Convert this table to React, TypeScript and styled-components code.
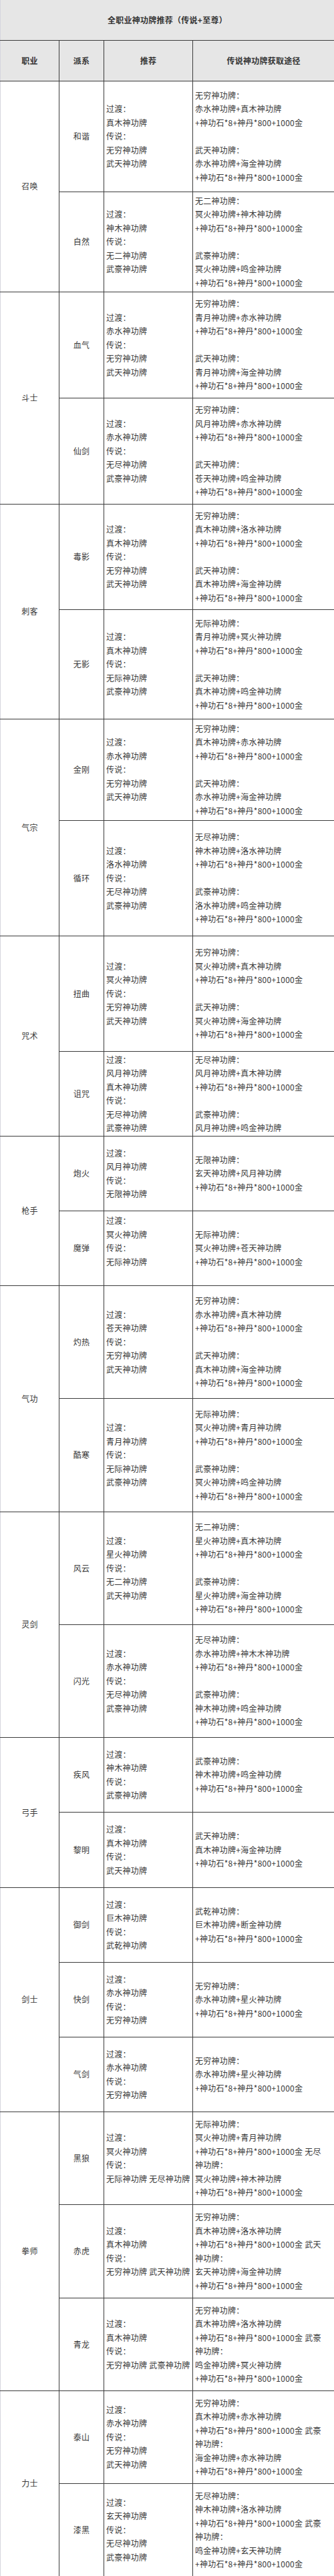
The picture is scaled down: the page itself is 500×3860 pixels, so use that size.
import React from "react";
import styled, { createGlobalStyle } from "styled-components";

type Branch = { name: string; h: number; rec: string[]; way: string[] };
type Job = { name: string; branches: Branch[] };

const COST = "+神功石*8+神丹*800+1000金";

const jobs: Job[] = [
  {
    name: "召唤",
    branches: [
      {
        name: "和谐",
        h: 166,
        rec: ["过渡：", "真木神功牌", "传说：", "无穷神功牌", "武天神功牌"],
        way: ["无穷神功牌：", "赤水神功牌+真木神功牌", COST, "", "武天神功牌：", "赤水神功牌+海金神功牌", COST],
      },
      {
        name: "自然",
        h: 150,
        rec: ["过渡：", "神木神功牌", "传说：", "无二神功牌", "武豪神功牌"],
        way: ["无二神功牌：", "冥火神功牌+神木神功牌", COST, "", "武豪神功牌：", "冥火神功牌+鸣金神功牌", COST],
      },
    ],
  },
  {
    name: "斗士",
    branches: [
      {
        name: "血气",
        h: 159,
        rec: ["过渡：", "赤水神功牌", "传说：", "无穷神功牌", "武天神功牌"],
        way: ["无穷神功牌：", "青月神功牌+赤水神功牌", COST, "", "武天神功牌：", "青月神功牌+海金神功牌", COST],
      },
      {
        name: "仙剑",
        h: 159,
        rec: ["过渡：", "赤水神功牌", "传说：", "无尽神功牌", "武豪神功牌"],
        way: ["无穷神功牌：", "风月神功牌+赤水神功牌", COST, "", "武天神功牌：", "苍天神功牌+鸣金神功牌", COST],
      },
    ],
  },
  {
    name: "刺客",
    branches: [
      {
        name: "毒影",
        h: 158,
        rec: ["过渡：", "真木神功牌", "传说：", "无穷神功牌", "武天神功牌"],
        way: ["无穷神功牌：", "真木神功牌+洛水神功牌", COST, "", "武天神功牌：", "真木神功牌+海金神功牌", COST],
      },
      {
        name: "无影",
        h: 164,
        rec: ["过渡：", "真木神功牌", "传说：", "无际神功牌", "武豪神功牌"],
        way: ["无际神功牌：", "青月神功牌+冥火神功牌", COST, "", "武天神功牌：", "真木神功牌+鸣金神功牌", COST],
      },
    ],
  },
  {
    name: "气宗",
    branches: [
      {
        name: "金刚",
        h: 152,
        rec: ["过渡：", "赤水神功牌", "传说：", "无穷神功牌", "武天神功牌"],
        way: ["无穷神功牌：", "真木神功牌+赤水神功牌", COST, "", "武天神功牌：", "赤水神功牌+海金神功牌", COST],
      },
      {
        name: "循环",
        h: 173,
        rec: ["过渡：", "洛水神功牌", "传说：", "无尽神功牌", "武豪神功牌"],
        way: ["无尽神功牌：", "神木神功牌+洛水神功牌", COST, "", "武豪神功牌：", "洛水神功牌+鸣金神功牌", COST],
      },
    ],
  },
  {
    name: "咒术",
    branches: [
      {
        name: "扭曲",
        h: 173,
        rec: ["过渡：", "冥火神功牌", "传说：", "无穷神功牌", "武天神功牌"],
        way: ["无穷神功牌：", "冥火神功牌+真木神功牌", COST, "", "武天神功牌：", "冥火神功牌+海金神功牌", COST],
      },
      {
        name: "诅咒",
        h: 127,
        rec: ["过渡：", "风月神功牌", "真木神功牌", "传说：", "无尽神功牌", "武豪神功牌"],
        way: ["无尽神功牌：", "风月神功牌+真木神功牌", COST, "", "武豪神功牌：", "风月神功牌+鸣金神功牌"],
      },
    ],
  },
  {
    name: "枪手",
    branches: [
      {
        name: "炮火",
        h: 112,
        rec: ["过渡：", "风月神功牌", "传说：", "无限神功牌"],
        way: ["无限神功牌：", "玄天神功牌+风月神功牌", COST],
      },
      {
        name: "魔弹",
        h: 112,
        rec: ["过渡：", "冥火神功牌", "传说：", "无际神功牌", ""],
        way: ["无际神功牌：", "冥火神功牌+苍天神功牌", COST],
      },
    ],
  },
  {
    name: "气功",
    branches: [
      {
        name: "灼热",
        h: 169,
        rec: ["过渡：", "苍天神功牌", "传说：", "无穷神功牌", "武天神功牌"],
        way: ["无穷神功牌：", "赤水神功牌+真木神功牌", COST, "", "武天神功牌：", "真木神功牌+海金神功牌", COST],
      },
      {
        name: "酷寒",
        h: 170,
        rec: ["过渡：", "青月神功牌", "传说：", "无际神功牌", "武豪神功牌"],
        way: ["无际神功牌：", "冥火神功牌+青月神功牌", COST, "", "武豪神功牌：", "冥火神功牌+鸣金神功牌", COST],
      },
    ],
  },
  {
    name: "灵剑",
    branches: [
      {
        name: "风云",
        h: 169,
        rec: ["过渡：", "星火神功牌", "传说：", "无二神功牌", "武天神功牌"],
        way: ["无二神功牌：", "星火神功牌+真木神功牌", COST, "", "武豪神功牌：", "星火神功牌+海金神功牌", COST],
      },
      {
        name: "闪光",
        h: 169,
        rec: ["过渡：", "赤水神功牌", "传说：", "无尽神功牌", "武豪神功牌"],
        way: ["无尽神功牌：", "赤水神功牌+神木木神功牌", COST, "", "武豪神功牌：", "神木神功牌+鸣金神功牌", COST],
      },
    ],
  },
  {
    name: "弓手",
    branches: [
      {
        name: "疾风",
        h: 112,
        rec: ["过渡：", "神木神功牌", "传说：", "武豪神功牌"],
        way: ["武豪神功牌：", "神木神功牌+鸣金神功牌", COST],
      },
      {
        name: "黎明",
        h: 113,
        rec: ["过渡：", "真木神功牌", "传说：", "武天神功牌"],
        way: ["武天神功牌：", "真木神功牌+海金神功牌", COST],
      },
    ],
  },
  {
    name: "剑士",
    branches: [
      {
        name: "御剑",
        h: 112,
        rec: ["过渡：", "巨木神功牌", "传说：", "武乾神功牌"],
        way: ["武乾神功牌：", "巨木神功牌+断金神功牌", COST],
      },
      {
        name: "快剑",
        h: 112,
        rec: ["过渡：", "赤水神功牌", "传说：", "无穷神功牌"],
        way: ["无穷神功牌：", "赤水神功牌+星火神功牌", COST],
      },
      {
        name: "气剑",
        h: 112,
        rec: ["过渡：", "赤水神功牌", "传说：", "无穷神功牌"],
        way: ["无穷神功牌：", "赤水神功牌+星火神功牌", COST],
      },
    ],
  },
  {
    name: "拳师",
    branches: [
      {
        name: "黑狼",
        h: 139,
        rec: ["过渡：", "冥火神功牌", "传说：", "无际神功牌 无尽神功牌"],
        way: ["无际神功牌：", "冥火神功牌+青月神功牌", COST + " 无尽", "神功牌：", "冥火神功牌+神木神功牌", COST],
      },
      {
        name: "赤虎",
        h: 140,
        rec: ["过渡：", "真木神功牌", "传说：", "无穷神功牌 武天神功牌"],
        way: ["无穷神功牌：", "真木神功牌+洛水神功牌", COST + " 武天", "神功牌：", "玄天神功牌+海金神功牌", COST],
      },
      {
        name: "青龙",
        h: 139,
        rec: ["过渡：", "真木神功牌", "传说：", "无穷神功牌 武豪神功牌"],
        way: ["无穷神功牌：", "真木神功牌+洛水神功牌", COST + " 武豪", "神功牌：", "鸣金神功牌+冥火神功牌", COST],
      },
    ],
  },
  {
    name: "力士",
    branches: [
      {
        name: "泰山",
        h: 139,
        rec: ["过渡：", "赤水神功牌", "传说：", "无穷神功牌", "武天神功牌"],
        way: ["无穷神功牌：", "真木神功牌+赤水神功牌", COST + " 武豪", "神功牌：", "海金神功牌+赤水神功牌", COST],
      },
      {
        name: "漆黑",
        h: 139,
        rec: ["过渡：", "玄天神功牌", "传说：", "无尽神功牌", "武豪神功牌"],
        way: ["无尽神功牌：", "神木神功牌+洛水神功牌", COST + " 武豪", "神功牌：", "鸣金神功牌+玄天神功牌", COST],
      },
    ],
  },
];

const GlobalStyle = createGlobalStyle`
  html, body {
    margin: 0;
    padding: 0;
    background: #ffffff;
  }
  body {
    font-family: "Noto Sans CJK SC", "Noto Sans", sans-serif;
  }
`;

const Table = styled.table`
  width: 500px;
  table-layout: fixed;
  border-collapse: collapse;
  font-size: 12px;
  line-height: 20.5px;
  letter-spacing: 0.25px;
  color: #3a3a3a;

  td,
  th {
    border: 1px solid #3c3c3c;
    padding: 0;
    vertical-align: middle;
  }

  tr > :first-child {
    border-left: 1px solid #d6d6de;
  }
`;

const TitleCell = styled.th`
  height: 60px;
  background: #e6e6e6;
  font-weight: bold;
  text-align: center;
  color: #333;
  && {
    border-top: none;
  }
`;

const HeadCell = styled.th`
  height: 60px;
  background: #e6e6e6;
  font-weight: bold;
  text-align: center;
  color: #333;
`;

const Row = styled.tr<{ $h: number }>`
  height: ${(p) => p.$h}px;
`;

const CenterCell = styled.td`
  text-align: center;
`;

const TextCell = styled.td`
  text-align: left;
  padding-left: 3px !important;
`;

const Line = styled.div`
  white-space: nowrap;
  min-height: 20.5px;
`;

const Lines: React.FC<{ items: string[] }> = ({ items }) => (
  <>
    {items.map((t, i) => (
      <Line key={i}>{t || "\u00a0"}</Line>
    ))}
  </>
);

export default function App() {
  return (
    <>
      <GlobalStyle />
      <Table>
        <colgroup>
          <col style={{ width: 88 }} />
          <col style={{ width: 67 }} />
          <col style={{ width: 133 }} />
          <col style={{ width: 212 }} />
        </colgroup>
        <thead>
          <tr>
            <TitleCell colSpan={4}>全职业神功牌推荐（传说+至尊）</TitleCell>
          </tr>
          <tr>
            <HeadCell>职业</HeadCell>
            <HeadCell>派系</HeadCell>
            <HeadCell>推荐</HeadCell>
            <HeadCell>传说神功牌获取途径</HeadCell>
          </tr>
        </thead>
        <tbody>
          {jobs.map((job) =>
            job.branches.map((b, i) => (
              <Row key={job.name + b.name} $h={b.h}>
                {i === 0 && <CenterCell rowSpan={job.branches.length}>{job.name}</CenterCell>}
                <CenterCell>{b.name}</CenterCell>
                <TextCell>
                  <Lines items={b.rec} />
                </TextCell>
                <TextCell>
                  <Lines items={b.way} />
                </TextCell>
              </Row>
            ))
          )}
        </tbody>
      </Table>
    </>
  );
}
